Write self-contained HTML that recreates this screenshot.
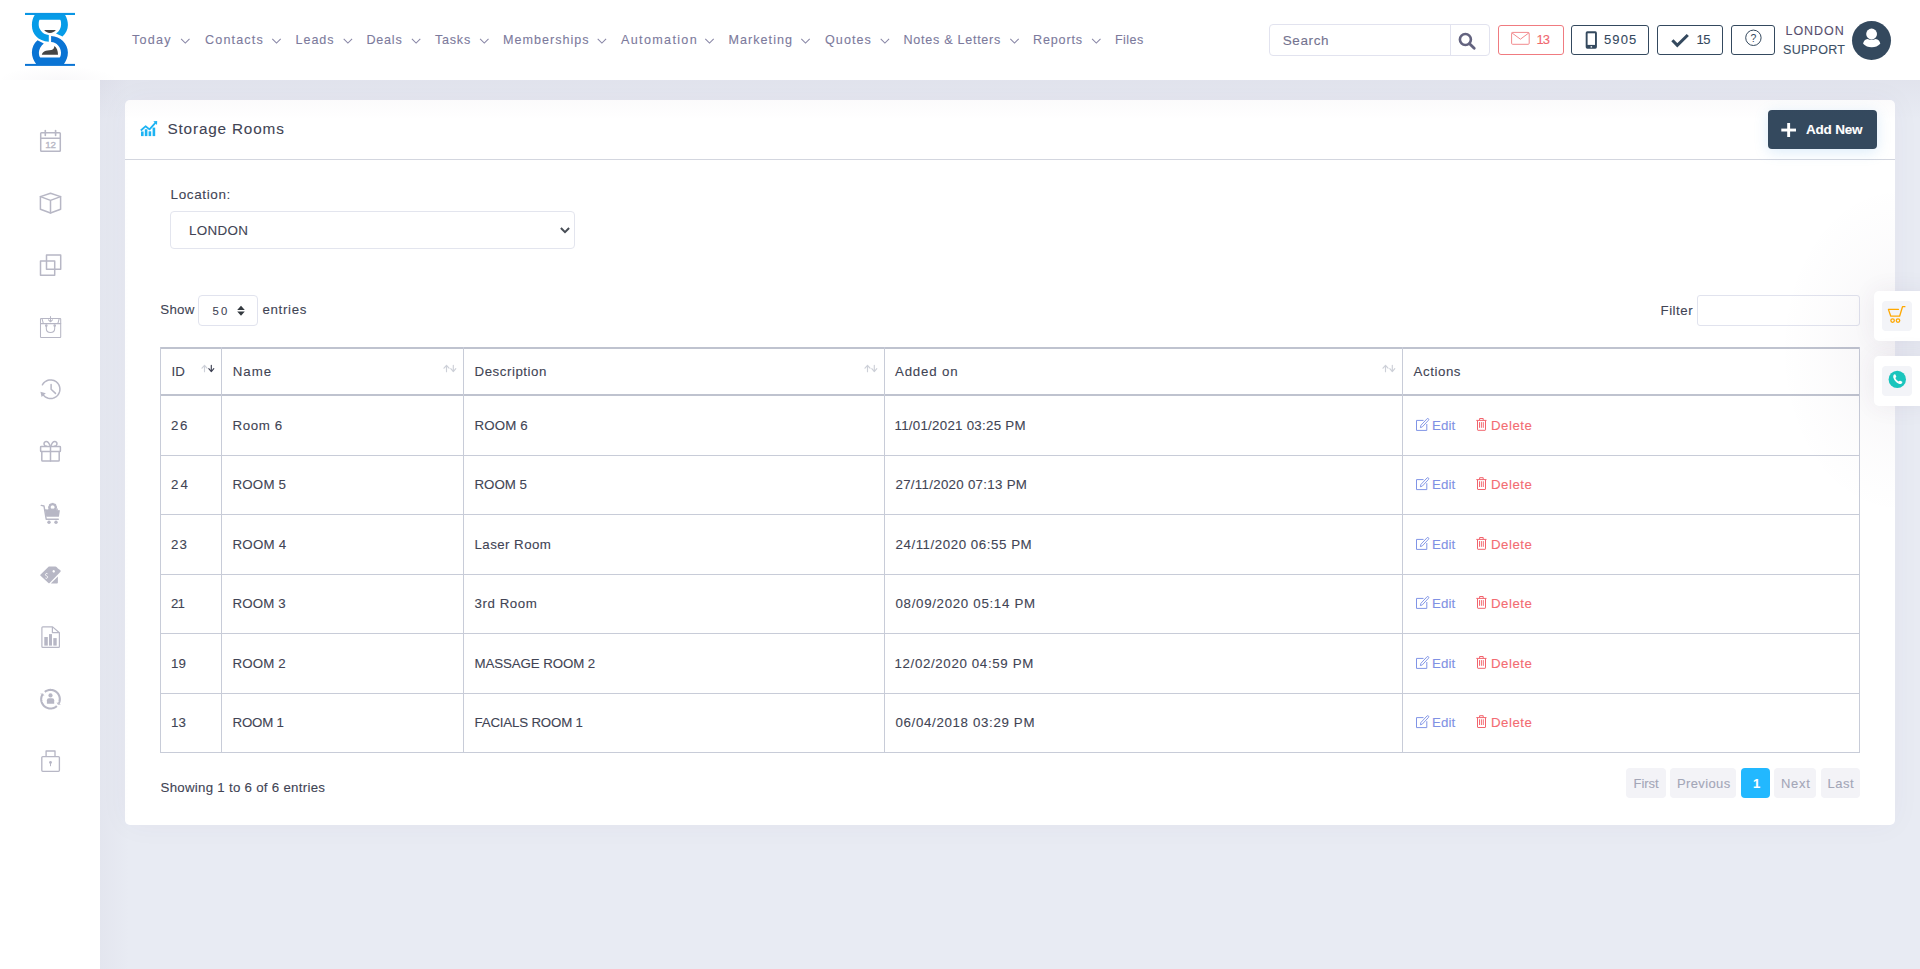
<!DOCTYPE html>
<html><head><meta charset="utf-8"><title>Storage Rooms</title>
<style>
html,body{margin:0;padding:0}
body{width:1920px;height:969px;position:relative;overflow:hidden;background:#e8ebf3;font-family:"Liberation Sans",sans-serif}
.a{position:absolute}
.t{position:absolute;white-space:nowrap;font-family:"Liberation Sans",sans-serif;-webkit-text-stroke:0.1px currentColor}
.hl{position:absolute;height:1px;background:#c8ccd8}
.vl{position:absolute;width:1px;background:#c8ccd8}
svg{position:absolute;left:0;top:0}
</style></head><body>

<div class="a" style="left:0;top:0;width:1920px;height:80px;background:#fff"></div>
<div class="a" style="left:0;top:80px;width:100px;height:889px;background:#fff"></div>
<div class="a" style="left:0;top:55px;width:120px;height:25px;background:radial-gradient(ellipse 60px 14px at 58px 25px,rgba(82,63,105,0.035),rgba(82,63,105,0))"></div>
<div class="a" style="left:125px;top:100px;width:1770px;height:725px;background:#fff;border-radius:5px;box-shadow:0 0 30px rgba(82,63,105,0.04)"></div>
<div class="hl" style="left:125px;top:159px;width:1770px;background:#d3d6df"></div>
<div class="a" style="left:1768px;top:110px;width:109px;height:39px;background:#34495e;border-radius:4px;box-shadow:0 3px 14px rgba(90,170,230,0.22)"></div>
<div class="a" style="left:1269px;top:24px;width:219px;height:30px;border:1px solid #e2e3ef;border-radius:4px;background:#fff"></div>
<div class="vl" style="left:1450px;top:25px;height:30px;background:#e2e3ef"></div>
<div class="a" style="left:1498px;top:25px;width:64px;height:28px;border:1px solid #f07b80;border-radius:3px"></div>
<div class="a" style="left:1571px;top:25px;width:76px;height:28px;border:1px solid #34495e;border-radius:3px"></div>
<div class="a" style="left:1657px;top:25px;width:64px;height:28px;border:1px solid #34495e;border-radius:3px"></div>
<div class="a" style="left:1731px;top:25px;width:42px;height:28px;border:1px solid #34495e;border-radius:3px"></div>
<div class="a" style="left:1852px;top:20.8px;width:39px;height:39px;border-radius:50%;background:#34495e"></div>
<div class="a" style="left:170px;top:211px;width:403px;height:36px;border:1px solid #e3e5ee;border-radius:4px;background:#fff"></div>
<div class="a" style="left:198px;top:295px;width:58px;height:29px;border:1px solid #e1e3ee;border-radius:4px;background:#fff"></div>
<div class="a" style="left:1697px;top:295px;width:161px;height:29px;border:1px solid #e1e3ee;border-radius:3px;background:#fff"></div>
<div class="hl" style="left:160px;top:347px;width:1700px;height:2px;background:#bfc3cf"></div>
<div class="hl" style="left:160px;top:394px;width:1700px;height:2px;background:#bfc3cf"></div>
<div class="hl" style="left:160px;top:455px;width:1700px"></div>
<div class="hl" style="left:160px;top:514px;width:1700px"></div>
<div class="hl" style="left:160px;top:574px;width:1700px"></div>
<div class="hl" style="left:160px;top:633px;width:1700px"></div>
<div class="hl" style="left:160px;top:693px;width:1700px"></div>
<div class="hl" style="left:160px;top:752px;width:1700px"></div>
<div class="vl" style="left:160px;top:347px;height:406px"></div>
<div class="vl" style="left:221px;top:347px;height:406px"></div>
<div class="vl" style="left:463px;top:347px;height:406px"></div>
<div class="vl" style="left:884px;top:347px;height:406px"></div>
<div class="vl" style="left:1402px;top:347px;height:406px"></div>
<div class="vl" style="left:1859px;top:347px;height:406px"></div>
<div class="a" style="left:1626px;top:768px;width:40px;height:30px;background:#f3f3f7;border-radius:4px"></div>
<div class="a" style="left:1670px;top:768px;width:66px;height:30px;background:#f3f3f7;border-radius:4px"></div>
<div class="a" style="left:1741px;top:768px;width:29px;height:30px;background:#22b8ff;border-radius:4px"></div>
<div class="a" style="left:1774px;top:768px;width:42px;height:30px;background:#f3f3f7;border-radius:4px"></div>
<div class="a" style="left:1821px;top:768px;width:39px;height:30px;background:#f3f3f7;border-radius:4px"></div>
<div class="a" style="left:1740px;top:170px;width:155px;height:360px;background:radial-gradient(ellipse 120px 165px at 160px 180px,rgba(82,63,105,0.06),rgba(82,63,105,0.015) 65%,rgba(82,63,105,0) 100%)"></div>
<div class="a" style="left:1874px;top:291px;width:60px;height:50px;background:#fff;border-radius:5px;box-shadow:0 0 25px rgba(82,63,105,0.07)"></div>
<div class="a" style="left:1882px;top:301px;width:30px;height:30px;background:#f3f4f8;border-radius:4px"></div>
<div class="a" style="left:1874px;top:356px;width:60px;height:50px;background:#fff;border-radius:5px;box-shadow:0 0 25px rgba(82,63,105,0.07)"></div>
<div class="a" style="left:1882px;top:366px;width:30px;height:30px;background:#f3f4f8;border-radius:4px"></div>
<div class="a" style="left:100px;top:80px;width:1820px;height:40px;background:linear-gradient(to bottom,rgba(82,63,105,0.045),rgba(82,63,105,0))"></div>
<div class="a" style="left:100px;top:80px;width:30px;height:889px;background:linear-gradient(to right,rgba(82,63,105,0.03),rgba(82,63,105,0))"></div>
<span class="t" style="left:132.00px;top:33.81px;font-size:12.6px;line-height:12.6px;letter-spacing:1.250px;color:#7c7a9c;font-weight:400">Today</span>
<span class="t" style="left:205.00px;top:33.81px;font-size:12.6px;line-height:12.6px;letter-spacing:1.143px;color:#7c7a9c;font-weight:400">Contacts</span>
<span class="t" style="left:295.50px;top:33.81px;font-size:12.6px;line-height:12.6px;letter-spacing:0.950px;color:#7c7a9c;font-weight:400">Leads</span>
<span class="t" style="left:366.50px;top:33.81px;font-size:12.6px;line-height:12.6px;letter-spacing:0.750px;color:#7c7a9c;font-weight:400">Deals</span>
<span class="t" style="left:435.00px;top:33.81px;font-size:12.6px;line-height:12.6px;letter-spacing:0.750px;color:#7c7a9c;font-weight:400">Tasks</span>
<span class="t" style="left:503.00px;top:33.81px;font-size:12.6px;line-height:12.6px;letter-spacing:1.000px;color:#7c7a9c;font-weight:400">Memberships</span>
<span class="t" style="left:621.00px;top:33.81px;font-size:12.6px;line-height:12.6px;letter-spacing:1.333px;color:#7c7a9c;font-weight:400">Automation</span>
<span class="t" style="left:728.50px;top:33.81px;font-size:12.6px;line-height:12.6px;letter-spacing:1.025px;color:#7c7a9c;font-weight:400">Marketing</span>
<span class="t" style="left:825.00px;top:33.81px;font-size:12.6px;line-height:12.6px;letter-spacing:1.040px;color:#7c7a9c;font-weight:400">Quotes</span>
<span class="t" style="left:903.50px;top:33.81px;font-size:12.6px;line-height:12.6px;letter-spacing:0.714px;color:#7c7a9c;font-weight:400">Notes &amp; Letters</span>
<span class="t" style="left:1033.00px;top:33.81px;font-size:12.6px;line-height:12.6px;letter-spacing:0.833px;color:#7c7a9c;font-weight:400">Reports</span>
<span class="t" style="left:1115.00px;top:33.81px;font-size:12.6px;line-height:12.6px;letter-spacing:0.400px;color:#7c7a9c;font-weight:400">Files</span>
<span class="t" style="left:1282.75px;top:34.01px;font-size:13.5px;line-height:13.5px;letter-spacing:0.600px;color:#74738f;font-weight:400">Search</span>
<span class="t" style="left:1536.50px;top:33.01px;font-size:13px;line-height:13px;letter-spacing:-1.000px;color:#f0686e;font-weight:400">13</span>
<span class="t" style="left:1604.00px;top:33.01px;font-size:13px;line-height:13px;letter-spacing:1.133px;color:#34495e;font-weight:400">5905</span>
<span class="t" style="left:1696.50px;top:33.01px;font-size:13px;line-height:13px;letter-spacing:-0.600px;color:#34495e;font-weight:400">15</span>
<span class="t" style="left:1785.50px;top:24.75px;font-size:12.5px;line-height:12.5px;letter-spacing:0.960px;color:#574f6e;font-weight:400">LONDON</span>
<span class="t" style="left:1783.00px;top:43.75px;font-size:12.5px;line-height:12.5px;letter-spacing:0.300px;color:#3d5066;font-weight:400">SUPPORT</span>
<span class="t" style="left:167.50px;top:120.81px;font-size:15.3px;line-height:15.3px;letter-spacing:0.833px;color:#414454;font-weight:400">Storage Rooms</span>
<span class="t" style="left:1806.00px;top:123.01px;font-size:13.5px;line-height:13.5px;letter-spacing:-0.200px;color:#ffffff;font-weight:700">Add New</span>
<span class="t" style="left:170.50px;top:188.20px;font-size:13.5px;line-height:13.5px;letter-spacing:0.625px;color:#414454;font-weight:400">Location:</span>
<span class="t" style="left:189.00px;top:224.00px;font-size:13.4px;line-height:13.4px;letter-spacing:0.320px;color:#414454;font-weight:400">LONDON</span>
<span class="t" style="left:160.25px;top:302.76px;font-size:13.3px;line-height:13.3px;letter-spacing:0.267px;color:#414454;font-weight:400">Show</span>
<span class="t" style="left:212.50px;top:305.82px;font-size:11.3px;line-height:11.3px;letter-spacing:2.200px;color:#414454;font-weight:400">50</span>
<span class="t" style="left:262.50px;top:302.76px;font-size:13.3px;line-height:13.3px;letter-spacing:0.667px;color:#414454;font-weight:400">entries</span>
<span class="t" style="left:1660.50px;top:304.01px;font-size:13.3px;line-height:13.3px;letter-spacing:0.520px;color:#414454;font-weight:400">Filter</span>
<span class="t" style="left:171.50px;top:365.01px;font-size:13.3px;line-height:13.3px;letter-spacing:0.000px;color:#414454;font-weight:400">ID</span>
<span class="t" style="left:232.75px;top:365.01px;font-size:13.3px;line-height:13.3px;letter-spacing:1.000px;color:#414454;font-weight:400">Name</span>
<span class="t" style="left:474.50px;top:365.01px;font-size:13.3px;line-height:13.3px;letter-spacing:0.540px;color:#414454;font-weight:400">Description</span>
<span class="t" style="left:895.00px;top:365.01px;font-size:13.3px;line-height:13.3px;letter-spacing:0.800px;color:#414454;font-weight:400">Added on</span>
<span class="t" style="left:1413.50px;top:365.01px;font-size:13.3px;line-height:13.3px;letter-spacing:0.567px;color:#414454;font-weight:400">Actions</span>
<span class="t" style="left:171.00px;top:418.80px;font-size:13.3px;line-height:13.3px;letter-spacing:1.600px;color:#414454;font-weight:400">26</span>
<span class="t" style="left:232.50px;top:418.80px;font-size:13.3px;line-height:13.3px;letter-spacing:0.600px;color:#414454;font-weight:400">Room 6</span>
<span class="t" style="left:474.50px;top:418.80px;font-size:13.3px;line-height:13.3px;letter-spacing:0.120px;color:#414454;font-weight:400">ROOM 6</span>
<span class="t" style="left:894.50px;top:418.80px;font-size:13.3px;line-height:13.3px;letter-spacing:0.267px;color:#414454;font-weight:400">11/01/2021 03:25 PM</span>
<span class="t" style="left:1432.00px;top:418.80px;font-size:13.3px;line-height:13.3px;letter-spacing:0.133px;color:#7f91e4;font-weight:400">Edit</span>
<span class="t" style="left:1491.00px;top:418.80px;font-size:13.3px;line-height:13.3px;letter-spacing:0.480px;color:#f36c72;font-weight:400">Delete</span>
<span class="t" style="left:171.00px;top:478.01px;font-size:13.3px;line-height:13.3px;letter-spacing:2.200px;color:#414454;font-weight:400">24</span>
<span class="t" style="left:232.50px;top:478.01px;font-size:13.3px;line-height:13.3px;letter-spacing:0.200px;color:#414454;font-weight:400">ROOM 5</span>
<span class="t" style="left:474.50px;top:478.01px;font-size:13.3px;line-height:13.3px;letter-spacing:0.000px;color:#414454;font-weight:400">ROOM 5</span>
<span class="t" style="left:895.50px;top:478.01px;font-size:13.3px;line-height:13.3px;letter-spacing:0.289px;color:#414454;font-weight:400">27/11/2020 07:13 PM</span>
<span class="t" style="left:1432.00px;top:478.01px;font-size:13.3px;line-height:13.3px;letter-spacing:0.133px;color:#7f91e4;font-weight:400">Edit</span>
<span class="t" style="left:1491.00px;top:478.01px;font-size:13.3px;line-height:13.3px;letter-spacing:0.480px;color:#f36c72;font-weight:400">Delete</span>
<span class="t" style="left:171.00px;top:537.80px;font-size:13.3px;line-height:13.3px;letter-spacing:1.000px;color:#414454;font-weight:400">23</span>
<span class="t" style="left:232.50px;top:537.80px;font-size:13.3px;line-height:13.3px;letter-spacing:0.240px;color:#414454;font-weight:400">ROOM 4</span>
<span class="t" style="left:474.50px;top:537.80px;font-size:13.3px;line-height:13.3px;letter-spacing:0.444px;color:#414454;font-weight:400">Laser Room</span>
<span class="t" style="left:895.50px;top:537.80px;font-size:13.3px;line-height:13.3px;letter-spacing:0.556px;color:#414454;font-weight:400">24/11/2020 06:55 PM</span>
<span class="t" style="left:1432.00px;top:537.80px;font-size:13.3px;line-height:13.3px;letter-spacing:0.133px;color:#7f91e4;font-weight:400">Edit</span>
<span class="t" style="left:1491.00px;top:537.80px;font-size:13.3px;line-height:13.3px;letter-spacing:0.480px;color:#f36c72;font-weight:400">Delete</span>
<span class="t" style="left:171.00px;top:596.80px;font-size:13.3px;line-height:13.3px;letter-spacing:-1.000px;color:#414454;font-weight:400">21</span>
<span class="t" style="left:232.50px;top:596.80px;font-size:13.3px;line-height:13.3px;letter-spacing:0.120px;color:#414454;font-weight:400">ROOM 3</span>
<span class="t" style="left:474.50px;top:596.80px;font-size:13.3px;line-height:13.3px;letter-spacing:0.571px;color:#414454;font-weight:400">3rd Room</span>
<span class="t" style="left:895.50px;top:596.80px;font-size:13.3px;line-height:13.3px;letter-spacing:0.689px;color:#414454;font-weight:400">08/09/2020 05:14 PM</span>
<span class="t" style="left:1432.00px;top:596.80px;font-size:13.3px;line-height:13.3px;letter-spacing:0.133px;color:#7f91e4;font-weight:400">Edit</span>
<span class="t" style="left:1491.00px;top:596.80px;font-size:13.3px;line-height:13.3px;letter-spacing:0.480px;color:#f36c72;font-weight:400">Delete</span>
<span class="t" style="left:171.00px;top:656.80px;font-size:13.3px;line-height:13.3px;letter-spacing:0.000px;color:#414454;font-weight:400">19</span>
<span class="t" style="left:232.50px;top:656.80px;font-size:13.3px;line-height:13.3px;letter-spacing:0.120px;color:#414454;font-weight:400">ROOM 2</span>
<span class="t" style="left:474.50px;top:656.80px;font-size:13.3px;line-height:13.3px;letter-spacing:-0.092px;color:#414454;font-weight:400">MASSAGE ROOM 2</span>
<span class="t" style="left:894.50px;top:656.80px;font-size:13.3px;line-height:13.3px;letter-spacing:0.644px;color:#414454;font-weight:400">12/02/2020 04:59 PM</span>
<span class="t" style="left:1432.00px;top:656.80px;font-size:13.3px;line-height:13.3px;letter-spacing:0.133px;color:#7f91e4;font-weight:400">Edit</span>
<span class="t" style="left:1491.00px;top:656.80px;font-size:13.3px;line-height:13.3px;letter-spacing:0.480px;color:#f36c72;font-weight:400">Delete</span>
<span class="t" style="left:171.00px;top:716.01px;font-size:13.3px;line-height:13.3px;letter-spacing:0.000px;color:#414454;font-weight:400">13</span>
<span class="t" style="left:232.50px;top:716.01px;font-size:13.3px;line-height:13.3px;letter-spacing:-0.200px;color:#414454;font-weight:400">ROOM 1</span>
<span class="t" style="left:474.50px;top:716.01px;font-size:13.3px;line-height:13.3px;letter-spacing:-0.185px;color:#414454;font-weight:400">FACIALS ROOM 1</span>
<span class="t" style="left:895.50px;top:716.01px;font-size:13.3px;line-height:13.3px;letter-spacing:0.656px;color:#414454;font-weight:400">06/04/2018 03:29 PM</span>
<span class="t" style="left:1432.00px;top:716.01px;font-size:13.3px;line-height:13.3px;letter-spacing:0.133px;color:#7f91e4;font-weight:400">Edit</span>
<span class="t" style="left:1491.00px;top:716.01px;font-size:13.3px;line-height:13.3px;letter-spacing:0.480px;color:#f36c72;font-weight:400">Delete</span>
<span class="t" style="left:160.50px;top:780.91px;font-size:13.3px;line-height:13.3px;letter-spacing:0.269px;color:#414454;font-weight:400">Showing 1 to 6 of 6 entries</span>
<span class="t" style="left:1633.50px;top:777.01px;font-size:13px;line-height:13px;letter-spacing:-0.050px;color:#a3a6b7;font-weight:400">First</span>
<span class="t" style="left:1677.00px;top:777.01px;font-size:13px;line-height:13px;letter-spacing:0.371px;color:#a3a6b7;font-weight:400">Previous</span>
<span class="t" style="left:1753.00px;top:777.01px;font-size:13px;line-height:13px;letter-spacing:0.000px;color:#ffffff;font-weight:700">1</span>
<span class="t" style="left:1781.00px;top:777.01px;font-size:13px;line-height:13px;letter-spacing:0.733px;color:#a3a6b7;font-weight:400">Next</span>
<span class="t" style="left:1827.50px;top:777.01px;font-size:13px;line-height:13px;letter-spacing:0.533px;color:#a3a6b7;font-weight:400">Last</span>
<svg width="1920" height="969" viewBox="0 0 1920 969"><path d="M34.7 15 C32.8 18 31.9 21.5 31.9 24.9 C31.9 30 33.5 33.5 36 36.2 C39 39.3 43.5 41.5 48.8 41.7 L48.8 35.1 C45.5 34.8 42.5 33.2 40.6 30.3 C39.2 28.3 38.7 26.5 38.7 24.5 C38.7 22 38.9 20.8 39.6 19.7 L60.2 19.7 C60.9 20.8 61.1 22 61.1 24.5 C61.1 28 59.3 31.4 56 33.6 L62.5 36.6 C65.9 33.3 67.9 29.2 67.9 24.9 C67.9 21.4 66.9 18 65.1 15 Z" fill="#069ce8"/><path d="M36.1 63.9 C33.5 60.5 31.9 56.5 31.9 52.5 C31.9 47.8 33.8 43.5 37.5 40.3 L43.8 43.4 C40.8 46 38.9 49.2 38.9 52.5 C38.9 54.5 39.1 56.2 40.2 57.5 L59.7 57.5 C60.8 56.2 61 54.5 61 52.5 C61 47 56.8 42.4 51.1 41.9 L51.1 36 C60.3 36.5 67.9 43.5 67.9 52.5 C67.9 56.8 66.4 60.7 64 63.9 Z" fill="#0a74d4"/><rect x="25" y="12.9" width="50" height="2.1" fill="#0a96e4"/><rect x="25" y="63.9" width="50" height="2" fill="#0a74d4"/><path d="M44.2 30.1 L55.9 30.1 C54.5 32 52.5 32.9 49.9 32.9 C47.4 32.9 45.5 32 44.2 30.1 Z" fill="#454545"/><path d="M41.8 54.8 C42.5 51.5 45.5 50.3 51.4 49.9 C53.2 49.6 54.2 48.3 54.4 45.9 C56.8 47.5 58 50.5 58 54.8 Z" fill="#454545"/><g fill="none" stroke="#b7b7c5" stroke-width="1.5" stroke-linejoin="round" stroke-linecap="round"><rect x="40.7" y="132.8" width="19.6" height="18.4" rx="0.8"/><line x1="40.7" y1="138.2" x2="60.3" y2="138.2"/><line x1="45.3" y1="130.6" x2="45.3" y2="135.4" stroke-width="1.6"/><line x1="55.6" y1="130.6" x2="55.6" y2="135.4" stroke-width="1.6"/></g><text x="50.6" y="148.3" font-family="Liberation Sans" font-size="9.8" fill="#b7b7c5" stroke="#b7b7c5" stroke-width="0.35" text-anchor="middle">12</text><g fill="none" stroke="#b7b7c5" stroke-width="1.5" stroke-linejoin="round" stroke-linecap="round"><path d="M50.5 193.3 L60.6 196.6 L60.6 209.3 L50.5 213 L40.4 209.3 L40.4 196.6 Z"/><path d="M40.4 196.6 L50.5 200.4 L60.6 196.6 M50.5 200.4 L50.5 213"/><rect x="46.5" y="254.9" width="14.2" height="14.4"/><rect x="40.5" y="260.9" width="14.2" height="14.4"/></g><g fill="none" stroke="#b7b7c5" stroke-width="1.05" stroke-linejoin="round" stroke-linecap="round"><rect x="40.5" y="318.4" width="20.2" height="19.1" rx="0.6"/><line x1="40.5" y1="323.6" x2="60.7" y2="323.6"/><path d="M46.3 325.6 L46.3 328.5 Q46.3 332.5 50.5 332.5 Q54.7 332.5 54.7 328.5 L54.7 325.6"/><circle cx="46.3" cy="325.6" r="0.8"/><circle cx="54.7" cy="325.6" r="0.8"/><path d="M50.5 316.6 L50.5 321.6 M48.5 319.8 L50.5 321.8 L52.5 319.8"/><path d="M42 318.6 L43.3 323.4 M59.2 318.6 L57.9 323.4"/></g><g fill="none" stroke="#b7b7c5" stroke-width="1.5" stroke-linejoin="round" stroke-linecap="round"><path d="M42.39 384.83 L43.03 383.79 L43.81 382.85 L44.70 382.01 L45.70 381.30 L46.78 380.72 L47.93 380.29 L49.12 380.02 L50.34 379.90 L51.56 379.95 L52.77 380.16 L53.94 380.52 L55.05 381.03 L56.09 381.69 L57.03 382.48 L57.85 383.38 L58.55 384.38 L59.12 385.47 L59.54 386.62 L59.80 387.82 L59.90 389.04 L59.84 390.26 L59.62 391.47 L59.24 392.63 L58.72 393.74 L58.05 394.76 L57.26 395.70 L56.34 396.51 L55.33 397.20 L54.24 397.76 L53.09 398.16 L51.89 398.41 L50.66 398.50 L49.44 398.43 L48.24 398.20 L47.08 397.81 L45.98 397.27 L44.96 396.59 L44.04 395.79 L43.23 394.87 L42.55 393.85"/></g><path d="M40.4 391.8 L45.8 393.2 L41.6 397 Z" fill="#b7b7c5"/><g fill="none" stroke="#b7b7c5" stroke-width="1.5" stroke-linejoin="round" stroke-linecap="round"><path d="M51.1 384.4 L51.1 389.3 L55.5 393.4"/><rect x="40.6" y="446.4" width="19.8" height="5.2" rx="0.7"/><path d="M41.8 451.6 L41.8 460.2 Q41.8 461 42.6 461 L58.4 461 Q59.2 461 59.2 460.2 L59.2 451.6"/><line x1="50.5" y1="446.4" x2="50.5" y2="461"/><path d="M50.2 446.2 Q48.5 441.3 46 441.6 Q43.7 442 44.1 444.3 Q44.5 446 46.5 446.2"/><path d="M50.8 446.2 Q52.5 441.3 55 441.6 Q57.3 442 56.9 444.3 Q56.5 446 54.5 446.2"/></g><g fill="#b7b7c5"><path d="M44.8 509.3 L59.9 510.2 L58.9 516.8 L46.3 516.8 Z"/></g><g fill="none" stroke="#b7b7c5" stroke-width="1.4" stroke-linecap="round" stroke-linejoin="round"><path d="M41.3 505.4 L44 506 L46.2 519.2 L58.3 519.2"/></g><g fill="#b7b7c5"><circle cx="49" cy="522.2" r="1.7"/><circle cx="56" cy="522.2" r="1.7"/><rect x="-1" y="-4.4" width="2" height="2.2" transform="translate(52.6 507.3) rotate(0)"/><rect x="-1" y="-4.4" width="2" height="2.2" transform="translate(52.6 507.3) rotate(45)"/><rect x="-1" y="-4.4" width="2" height="2.2" transform="translate(52.6 507.3) rotate(90)"/><rect x="-1" y="-4.4" width="2" height="2.2" transform="translate(52.6 507.3) rotate(135)"/><rect x="-1" y="-4.4" width="2" height="2.2" transform="translate(52.6 507.3) rotate(180)"/><rect x="-1" y="-4.4" width="2" height="2.2" transform="translate(52.6 507.3) rotate(225)"/><rect x="-1" y="-4.4" width="2" height="2.2" transform="translate(52.6 507.3) rotate(270)"/><rect x="-1" y="-4.4" width="2" height="2.2" transform="translate(52.6 507.3) rotate(315)"/></g><circle cx="52.6" cy="507.3" r="3.1" fill="none" stroke="#b7b7c5" stroke-width="1.9"/><rect x="48" y="508.6" width="10" height="1.2" fill="#b7b7c5"/><g fill="#b7b7c5"><path d="M40.3 575.6 Q40 575 40.6 574.4 L48.8 566.4 L55.4 566.4 Q56.2 566.6 56.8 567.2 L57.9 568.4 L60.4 570.3 Q61 571 60.5 571.8 L49.6 583 Q49 583.6 48.4 583 Z M53.7 570.1 a1.2 1.2 0 1 0 0.01 0 Z" fill-rule="evenodd"/><path d="M50.8 583.6 L57.9 576.4 L57.9 582.6 Q57.9 583.6 56.9 583.6 Z"/></g><path d="M47.5 573.7 Q46 572.8 45.5 574.3 Q45.2 575.6 46.7 575.9 Q48 576.3 47.6 577.6 Q47 579 45.5 578" fill="none" stroke="#fff" stroke-width="0.9"/><g fill="none" stroke="#b7b7c5" stroke-width="1.2" stroke-linejoin="round"><path d="M52.6 626.9 L42.8 626.9 Q41.9 626.9 41.9 627.8 L41.9 646.5 Q41.9 647.4 42.8 647.4 L58.6 647.4 Q59.4 647.4 59.4 646.5 L59.4 632.8 Z"/><path d="M52.4 627 L52.4 632.6 L59.3 632.6"/></g><g fill="#b7b7c5"><rect x="44.3" y="637" width="3.5" height="8.6"/><rect x="49" y="634.1" width="3" height="11.5"/><rect x="53.3" y="638.1" width="3.4" height="7.5"/></g><g fill="none" stroke="#b7b7c5" stroke-width="2.1"><path d="M44.77 691.87 L45.29 691.50 L45.82 691.16 L46.38 690.86 L46.96 690.60 L47.55 690.38 L48.16 690.20 L48.77 690.06 L49.40 689.97 L50.03 689.91 L50.66 689.90 L51.29 689.93 L51.92 690.01 L52.54 690.13 L53.16 690.29 L53.76 690.49 L54.34 690.73 L54.91 691.01 L55.46 691.33 L55.98 691.69 L56.48 692.08 L56.95 692.50 L57.39 692.95 L57.80 693.44 L58.17 693.95 L58.51 694.48 L58.82 695.04 L59.08 695.61 L59.30 696.20 L59.49 696.81 L59.63 697.43 L59.73 698.05 L59.79 698.68 L59.80 699.31 L59.77 699.95 L59.70 700.57 L59.58 701.20 L59.43 701.81 L59.23 702.41 L58.99 703.00 L58.71 703.57"/><path d="M56.84 706.00 L56.35 706.43 L55.83 706.82 L55.28 707.18 L54.71 707.49 L54.12 707.77 L53.50 708.00 L52.88 708.19 L52.24 708.34 L51.60 708.44 L50.95 708.49 L50.29 708.50 L49.64 708.46 L48.99 708.38 L48.35 708.25 L47.72 708.08 L47.11 707.86 L46.51 707.60 L45.93 707.30 L45.37 706.96 L44.84 706.58 L44.33 706.16 L43.86 705.71 L43.42 705.23 L43.01 704.72 L42.65 704.18 L42.32 703.62 L42.03 703.03 L41.78 702.43 L41.57 701.81 L41.41 701.17 L41.30 700.53 L41.22 699.88 L41.20 699.23 L41.22 698.58 L41.29 697.93 L41.40 697.28 L41.56 696.65 L41.76 696.03 L42.00 695.42 L42.29 694.83"/></g><g fill="#b7b7c5"><path d="M56.56 702.29 L61.01 704.56 L57.93 704.80 Z"/><path d="M44.44 696.11 L39.99 693.84 L43.07 693.60 Z"/><circle cx="50.5" cy="695.4" r="2.1"/><path d="M46.9 703.7 L46.9 700.3 Q46.9 698.3 48.9 698.3 L52.2 698.3 Q54.2 698.3 54.2 700.3 L54.2 703.7 Z"/></g><g fill="none" stroke="#b7b7c5" stroke-width="1.35" stroke-linejoin="round"><path d="M46.1 756.5 L46.1 751 L55 751 L55 756.5"/><rect x="41.8" y="756.6" width="17.6" height="14.7" rx="1"/></g><g fill="#b7b7c5"><circle cx="50.5" cy="762.4" r="1.4"/><rect x="50" y="762.4" width="1" height="3.8"/></g><g fill="none" stroke="#8886a6" stroke-width="1.05"><path d="M181.1 38.9 L185.3 43.1 L189.5 38.9"/><path d="M272.3 38.9 L276.5 43.1 L280.7 38.9"/><path d="M343.7 38.9 L347.9 43.1 L352.1 38.9"/><path d="M411.9 38.9 L416.1 43.1 L420.3 38.9"/><path d="M480.1 38.9 L484.3 43.1 L488.5 38.9"/><path d="M597.7 38.9 L601.9 43.1 L606.1 38.9"/><path d="M705.3 38.9 L709.5 43.1 L713.7 38.9"/><path d="M801.3 38.9 L805.5 43.1 L809.7 38.9"/><path d="M880.7 38.9 L884.9 43.1 L889.1 38.9"/><path d="M1010.3 38.9 L1014.5 43.1 L1018.7 38.9"/><path d="M1092.1 38.9 L1096.3 43.1 L1100.5 38.9"/></g><circle cx="1465.4" cy="39.5" r="5.5" fill="none" stroke="#63637f" stroke-width="2.6"/><line x1="1469.6" y1="43.8" x2="1474.2" y2="48.2" stroke="#63637f" stroke-width="2.9" stroke-linecap="round"/><rect x="1511.6" y="32.4" width="17.6" height="11.9" rx="1" fill="none" stroke="#f28a8e" stroke-width="1"/><path d="M1511.8 32.8 L1520.4 39.2 L1529 32.8" fill="none" stroke="#f28a8e" stroke-width="1"/><rect x="1585.7" y="31.3" width="11.2" height="17.4" rx="1.6" fill="#34495e"/><rect x="1587.6" y="33.3" width="7.4" height="11.6" fill="#fff"/><rect x="1590.6" y="46.2" width="1.5" height="1.3" fill="#fff"/><path d="M1672.4 40.2 L1677.3 45.3 L1687.8 35" fill="none" stroke="#34495e" stroke-width="3.1"/><circle cx="1753.4" cy="37.8" r="7.7" fill="none" stroke="#34495e" stroke-width="1"/><text x="1753.4" y="41.6" font-family="Liberation Sans" font-size="10.5" fill="#34495e" text-anchor="middle">?</text><circle cx="1871.6" cy="34" r="5.4" fill="#fff"/><path d="M1863.1 43.8 Q1863.6 39.5 1867.6 38.9 Q1871.6 40.8 1875.6 38.9 Q1879.7 39.5 1880.3 43.8 Q1876.6 47.4 1871.7 47.3 Q1866.8 47.4 1863.1 43.8 Z" fill="#fff"/><g fill="#1db3f3"><rect x="141" y="131.5" width="2.6" height="4.6"/><rect x="144.8" y="129.3" width="2.6" height="6.8"/><rect x="148.6" y="131.3" width="2.6" height="4.8"/><rect x="152.6" y="127.6" width="2.6" height="8.5"/><path d="M153.3 121.2 L157.2 121 L157 124.9 Z"/></g><path d="M140.8 130.5 L145.5 126.3 L149.5 129.4 L155.6 122.6" fill="none" stroke="#1db3f3" stroke-width="1.8" stroke-linejoin="round"/><rect x="1781.3" y="128.6" width="14.7" height="2.9" fill="#fff"/><rect x="1787.2" y="123" width="2.9" height="14" fill="#fff"/><path d="M560.9 228 L565 232.1 L569.1 228" fill="none" stroke="#474d55" stroke-width="2"/><path d="M237.2 310 L241 305.8 L244.8 310 Z M237.2 311.6 L241 315.8 L244.8 311.6 Z" fill="#343a40"/><g fill="none" stroke-width="1.15" stroke-linecap="round" stroke-linejoin="round"><path d="M204.5 365.3 L204.5 371.7 M202.0 368.2 L204.5 365.3 L207.0 368.2" stroke="#cdd0d8"/><path d="M211.3 365.2 L211.3 371.6 M208.8 368.7 L211.3 371.6 L213.8 368.7" stroke="#3f4254"/></g><g fill="none" stroke-width="1.15" stroke-linecap="round" stroke-linejoin="round"><path d="M446.5 365.3 L446.5 371.7 M444.0 368.2 L446.5 365.3 L449.0 368.2" stroke="#cdd0d8"/><path d="M453.3 365.2 L453.3 371.6 M450.8 368.7 L453.3 371.6 L455.8 368.7" stroke="#cdd0d8"/></g><g fill="none" stroke-width="1.15" stroke-linecap="round" stroke-linejoin="round"><path d="M867.5 365.3 L867.5 371.7 M865.0 368.2 L867.5 365.3 L870.0 368.2" stroke="#cdd0d8"/><path d="M874.3 365.2 L874.3 371.6 M871.8 368.7 L874.3 371.6 L876.8 368.7" stroke="#cdd0d8"/></g><g fill="none" stroke-width="1.15" stroke-linecap="round" stroke-linejoin="round"><path d="M1385.5 365.3 L1385.5 371.7 M1383.0 368.2 L1385.5 365.3 L1388.0 368.2" stroke="#cdd0d8"/><path d="M1392.3 365.2 L1392.3 371.6 M1389.8 368.7 L1392.3 371.6 L1394.8 368.7" stroke="#cdd0d8"/></g><g transform="translate(0 0.00)"><path d="M1423.5 420.4 L1416.5 420.4 L1416.5 430.4 L1426.8 430.4 L1426.8 424" fill="none" stroke="#8094e6" stroke-width="1"/><path d="M1420.4 427.6 L1420.9 425.3 L1427.2 418.6 Q1428 418.2 1428.6 418.9 Q1429 419.6 1428.5 420.2 L1422.3 426.9 Z" fill="none" stroke="#8094e6" stroke-width="0.95" stroke-linejoin="round"/><g fill="none" stroke="#f2646d" stroke-width="1"><path d="M1476.3 420.4 L1486.5 420.4 M1479.6 420.2 L1479.6 418.5 L1483.2 418.5 L1483.2 420.2"/><path d="M1477.5 420.6 L1477.5 429.8 Q1477.5 430.3 1478 430.3 L1485 430.3 Q1485.5 430.3 1485.5 429.8 L1485.5 420.6"/><path d="M1479.5 422.1 L1479.5 427.8 M1481.4 422.1 L1481.4 427.8 M1483.3 422.1 L1483.3 427.8" stroke-width="0.95"/></g></g><g transform="translate(0 59.20)"><path d="M1423.5 420.4 L1416.5 420.4 L1416.5 430.4 L1426.8 430.4 L1426.8 424" fill="none" stroke="#8094e6" stroke-width="1"/><path d="M1420.4 427.6 L1420.9 425.3 L1427.2 418.6 Q1428 418.2 1428.6 418.9 Q1429 419.6 1428.5 420.2 L1422.3 426.9 Z" fill="none" stroke="#8094e6" stroke-width="0.95" stroke-linejoin="round"/><g fill="none" stroke="#f2646d" stroke-width="1"><path d="M1476.3 420.4 L1486.5 420.4 M1479.6 420.2 L1479.6 418.5 L1483.2 418.5 L1483.2 420.2"/><path d="M1477.5 420.6 L1477.5 429.8 Q1477.5 430.3 1478 430.3 L1485 430.3 Q1485.5 430.3 1485.5 429.8 L1485.5 420.6"/><path d="M1479.5 422.1 L1479.5 427.8 M1481.4 422.1 L1481.4 427.8 M1483.3 422.1 L1483.3 427.8" stroke-width="0.95"/></g></g><g transform="translate(0 119.00)"><path d="M1423.5 420.4 L1416.5 420.4 L1416.5 430.4 L1426.8 430.4 L1426.8 424" fill="none" stroke="#8094e6" stroke-width="1"/><path d="M1420.4 427.6 L1420.9 425.3 L1427.2 418.6 Q1428 418.2 1428.6 418.9 Q1429 419.6 1428.5 420.2 L1422.3 426.9 Z" fill="none" stroke="#8094e6" stroke-width="0.95" stroke-linejoin="round"/><g fill="none" stroke="#f2646d" stroke-width="1"><path d="M1476.3 420.4 L1486.5 420.4 M1479.6 420.2 L1479.6 418.5 L1483.2 418.5 L1483.2 420.2"/><path d="M1477.5 420.6 L1477.5 429.8 Q1477.5 430.3 1478 430.3 L1485 430.3 Q1485.5 430.3 1485.5 429.8 L1485.5 420.6"/><path d="M1479.5 422.1 L1479.5 427.8 M1481.4 422.1 L1481.4 427.8 M1483.3 422.1 L1483.3 427.8" stroke-width="0.95"/></g></g><g transform="translate(0 178.00)"><path d="M1423.5 420.4 L1416.5 420.4 L1416.5 430.4 L1426.8 430.4 L1426.8 424" fill="none" stroke="#8094e6" stroke-width="1"/><path d="M1420.4 427.6 L1420.9 425.3 L1427.2 418.6 Q1428 418.2 1428.6 418.9 Q1429 419.6 1428.5 420.2 L1422.3 426.9 Z" fill="none" stroke="#8094e6" stroke-width="0.95" stroke-linejoin="round"/><g fill="none" stroke="#f2646d" stroke-width="1"><path d="M1476.3 420.4 L1486.5 420.4 M1479.6 420.2 L1479.6 418.5 L1483.2 418.5 L1483.2 420.2"/><path d="M1477.5 420.6 L1477.5 429.8 Q1477.5 430.3 1478 430.3 L1485 430.3 Q1485.5 430.3 1485.5 429.8 L1485.5 420.6"/><path d="M1479.5 422.1 L1479.5 427.8 M1481.4 422.1 L1481.4 427.8 M1483.3 422.1 L1483.3 427.8" stroke-width="0.95"/></g></g><g transform="translate(0 238.00)"><path d="M1423.5 420.4 L1416.5 420.4 L1416.5 430.4 L1426.8 430.4 L1426.8 424" fill="none" stroke="#8094e6" stroke-width="1"/><path d="M1420.4 427.6 L1420.9 425.3 L1427.2 418.6 Q1428 418.2 1428.6 418.9 Q1429 419.6 1428.5 420.2 L1422.3 426.9 Z" fill="none" stroke="#8094e6" stroke-width="0.95" stroke-linejoin="round"/><g fill="none" stroke="#f2646d" stroke-width="1"><path d="M1476.3 420.4 L1486.5 420.4 M1479.6 420.2 L1479.6 418.5 L1483.2 418.5 L1483.2 420.2"/><path d="M1477.5 420.6 L1477.5 429.8 Q1477.5 430.3 1478 430.3 L1485 430.3 Q1485.5 430.3 1485.5 429.8 L1485.5 420.6"/><path d="M1479.5 422.1 L1479.5 427.8 M1481.4 422.1 L1481.4 427.8 M1483.3 422.1 L1483.3 427.8" stroke-width="0.95"/></g></g><g transform="translate(0 297.20)"><path d="M1423.5 420.4 L1416.5 420.4 L1416.5 430.4 L1426.8 430.4 L1426.8 424" fill="none" stroke="#8094e6" stroke-width="1"/><path d="M1420.4 427.6 L1420.9 425.3 L1427.2 418.6 Q1428 418.2 1428.6 418.9 Q1429 419.6 1428.5 420.2 L1422.3 426.9 Z" fill="none" stroke="#8094e6" stroke-width="0.95" stroke-linejoin="round"/><g fill="none" stroke="#f2646d" stroke-width="1"><path d="M1476.3 420.4 L1486.5 420.4 M1479.6 420.2 L1479.6 418.5 L1483.2 418.5 L1483.2 420.2"/><path d="M1477.5 420.6 L1477.5 429.8 Q1477.5 430.3 1478 430.3 L1485 430.3 Q1485.5 430.3 1485.5 429.8 L1485.5 420.6"/><path d="M1479.5 422.1 L1479.5 427.8 M1481.4 422.1 L1481.4 427.8 M1483.3 422.1 L1483.3 427.8" stroke-width="0.95"/></g></g><g fill="none" stroke="#ffa800" stroke-width="1.3" stroke-linejoin="round" stroke-linecap="round"><path d="M1898.4 309.4 L1888.4 309.4 L1890.8 316.2 L1899.6 316.2 L1902.5 306.7 L1904.9 306.7" /><circle cx="1892.6" cy="320.6" r="1.75"/><circle cx="1898" cy="320.6" r="1.75"/></g><circle cx="1897.3" cy="379.4" r="8.7" fill="#1bc5bd"/><path d="M1893.6 375 Q1894.3 374 1895.2 374.2 L1896.3 376.4 Q1896.4 377 1895.8 377.5 L1895.3 377.9 Q1896.3 380.4 1898.7 381.6 L1899.2 381 Q1899.7 380.5 1900.3 380.7 L1902.3 381.8 Q1902.5 382.7 1901.6 383.5 Q1900.6 384.5 1898.8 383.8 Q1894.8 382 1893.3 377.5 Q1893 376 1893.6 375 Z" fill="#fff"/></svg>
</body></html>
